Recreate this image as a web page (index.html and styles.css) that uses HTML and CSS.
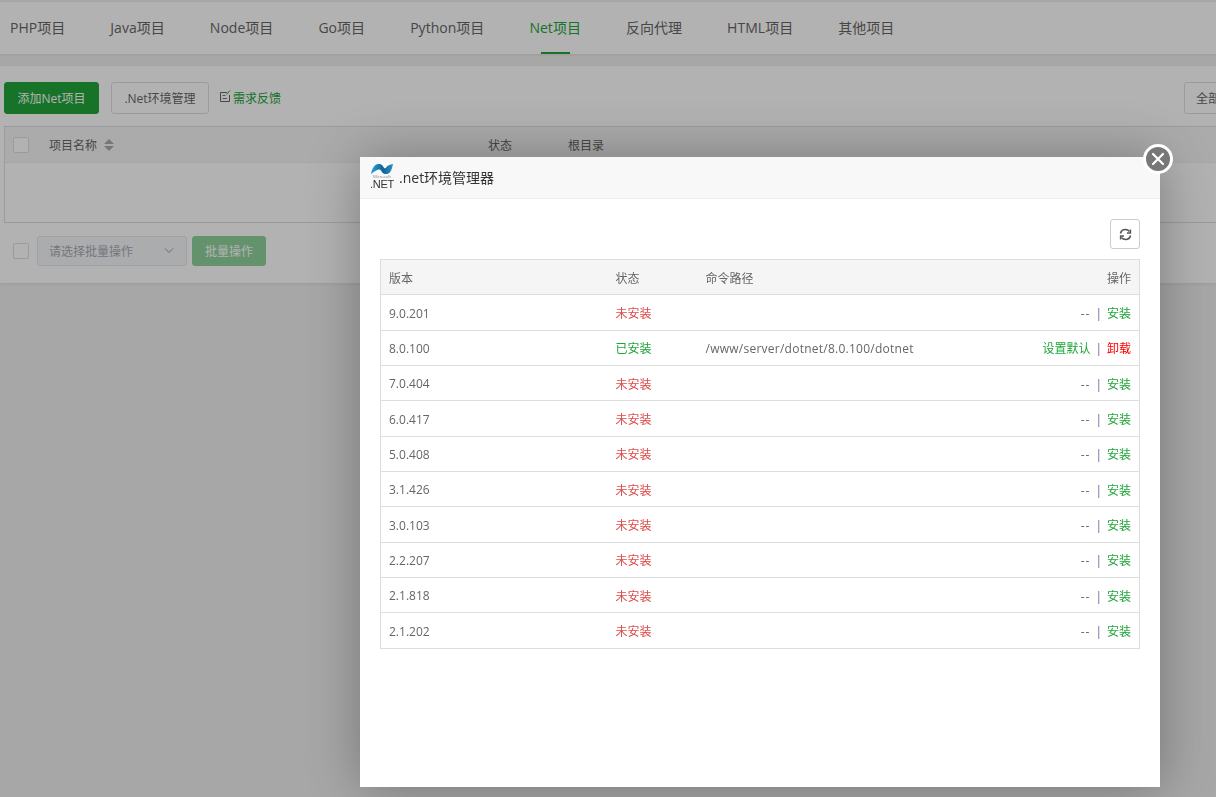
FILE: index.html
```html
<!DOCTYPE html>
<html lang="en">
<head>
  <meta charset="UTF-8" />
  <title>Net项目</title>
  <link rel="stylesheet" href="styles.css">
</head>
<body>

  <div class="page">
    <div class="tabs">
      <a class="tab">PHP项目</a>
      <a class="tab">Java项目</a>
      <a class="tab">Node项目</a>
      <a class="tab">Go项目</a>
      <a class="tab">Python项目</a>
      <a class="tab active">Net项目</a>
      <a class="tab">反向代理</a>
      <a class="tab">HTML项目</a>
      <a class="tab">其他项目</a>
    </div>

    <div class="card">
      <div class="toolbar">
        <button class="btn btn-green">添加Net项目</button>
        <button class="btn btn-plain">.Net环境管理</button>
        <a class="feedback">
          <svg width="12" height="13" viewBox="0 0 12 13" fill="none" stroke="#666">
            <path d="M8 2.5H1.5V11.5H10.5V5"/>
            <path d="M3.5 5.5H6.5M3.5 8.5H8" stroke="#777"/>
            <path d="M11 .5L7.5 4.5" stroke="#20a53a"/>
          </svg>
          <span>需求反馈</span>
        </a>
        <button class="btn btn-plain btn-all">全部</button>
      </div>

      <div class="project-table">
        <div class="project-head">
          <span class="check"></span>
          <span class="col-name">项目名称</span>
          <span class="sort"><i class="up"></i><i class="down"></i></span>
          <span class="col-status">状态</span>
          <span class="col-root">根目录</span>
        </div>
        <div class="project-body"></div>
      </div>

      <div class="batch">
        <span class="check"></span>
        <div class="batch-select">
          <span>请选择批量操作</span>
          <svg width="10" height="6" viewBox="0 0 10 6" fill="none" stroke="#999"><path d="M1 .5L5 4.5L9 .5"/></svg>
        </div>
        <button class="btn btn-batch">批量操作</button>
      </div>
    </div>
  </div>

  <div class="overlay"></div>

  <div class="modal">
    <div class="modal-title">
      <div class="net-logo">
        <svg width="22" height="10" viewBox="0 0 22 10">
          <defs>
            <linearGradient id="netWave" x1="0" y1="0" x2="1" y2="0">
              <stop offset="0" stop-color="#2f9fd4"/>
              <stop offset=".55" stop-color="#0d6596"/>
              <stop offset="1" stop-color="#2b93c6"/>
            </linearGradient>
          </defs>
          <path d="M0 10C1 4.5 3.5 0 7.5 0C11 0 11.8 2 13 3.8C13.8 4.8 14.6 4.4 15.4 3.2C16.6 1.6 18.5 .6 22 0C21.2 3.5 20.2 10 15.5 10C11.5 10 10.8 7.5 9.8 6.2C9 5.2 8 5.2 6.8 5.8C4.5 6.8 2.5 8.2 0 10Z" fill="url(#netWave)"/>
        </svg>
        <span class="net-small">Microsoft</span>
        <span class="net-word">.NET</span>
      </div>
      <span class="modal-name">.net环境管理器</span>
    </div>
    <a class="modal-close">
      <svg width="14" height="14" viewBox="0 0 14 14" stroke="#fff" stroke-width="2.2" stroke-linecap="round"><path d="M2 2L12 12M12 2L2 12"/></svg>
    </a>

    <div class="modal-body">
      <div class="refresh-row">
        <button class="refresh">
          <svg width="13" height="13" viewBox="0 0 13 13" fill="none" stroke="#555" stroke-width="1.6">
            <path d="M1.5 5.5C2 3 4 1.5 6.5 1.5C8.3 1.5 9.6 2.4 10.6 3.6"/>
            <path d="M11.5 7.5C11 10 9 11.5 6.5 11.5C4.7 11.5 3.4 10.6 2.4 9.4"/>
            <path d="M11.5 1.5V5H8" stroke-width="1.3"/>
            <path d="M1.5 11.5V8H5" stroke-width="1.3"/>
          </svg>
        </button>
      </div>

      <table class="env-table">
        <thead>
          <tr><th class="c-ver">版本</th><th class="c-state">状态</th><th>命令路径</th><th class="c-op">操作</th></tr>
        </thead>
        <tbody>
          <tr><td>9.0.201</td><td class="no">未安装</td><td></td><td class="c-op"><span class="dash">--</span><span class="sep">|</span><a class="ok">安装</a></td></tr>
          <tr><td>8.0.100</td><td class="ok">已安装</td><td class="c-path">/www/server/dotnet/8.0.100/dotnet</td><td class="c-op"><a class="ok">设置默认</a><span class="sep">|</span><a class="del">卸载</a></td></tr>
          <tr><td>7.0.404</td><td class="no">未安装</td><td></td><td class="c-op"><span class="dash">--</span><span class="sep">|</span><a class="ok">安装</a></td></tr>
          <tr><td>6.0.417</td><td class="no">未安装</td><td></td><td class="c-op"><span class="dash">--</span><span class="sep">|</span><a class="ok">安装</a></td></tr>
          <tr><td>5.0.408</td><td class="no">未安装</td><td></td><td class="c-op"><span class="dash">--</span><span class="sep">|</span><a class="ok">安装</a></td></tr>
          <tr><td>3.1.426</td><td class="no">未安装</td><td></td><td class="c-op"><span class="dash">--</span><span class="sep">|</span><a class="ok">安装</a></td></tr>
          <tr><td>3.0.103</td><td class="no">未安装</td><td></td><td class="c-op"><span class="dash">--</span><span class="sep">|</span><a class="ok">安装</a></td></tr>
          <tr><td>2.2.207</td><td class="no">未安装</td><td></td><td class="c-op"><span class="dash">--</span><span class="sep">|</span><a class="ok">安装</a></td></tr>
          <tr><td>2.1.818</td><td class="no">未安装</td><td></td><td class="c-op"><span class="dash">--</span><span class="sep">|</span><a class="ok">安装</a></td></tr>
          <tr><td>2.1.202</td><td class="no">未安装</td><td></td><td class="c-op"><span class="dash">--</span><span class="sep">|</span><a class="ok">安装</a></td></tr>
        </tbody>
      </table>
    </div>
  </div>

</body>
</html>
```

FILE: styles.css
```css
* {
  margin: 0;
  padding: 0;
  box-sizing: border-box;
  font-family: "Open Sans", "Noto Sans CJK SC", sans-serif;
}

html, body {
  height: 100%;
  overflow: hidden;
}

body {
  background: #f0f0f0;
  color: #666;
  font-size: 12px;
}

.page {
  padding-top: 2px;
}

/* top tabs */
.tabs {
  display: flex;
  height: 52px;
  background: #fff;
  padding-left: 10px;
  gap: 45px;
  box-shadow: 0 1px 3px rgba(0, 0, 0, 0.08);
}

.tab {
  position: relative;
  line-height: 52px;
  font-size: 14px;
  letter-spacing: 0.03px;
  color: #666;
  white-space: nowrap;
}

.tab.active {
  color: #20a53a;
}

.tab.active::after {
  content: "";
  position: absolute;
  left: 12px;
  right: 11px;
  bottom: 0;
  height: 2px;
  background: #20a53a;
}

/* main card */
.card {
  margin-top: 12px;
  height: 217px;
  background: #fff;
  padding: 16px 0 0 4px;
  box-shadow: 0 1px 3px rgba(0, 0, 0, 0.08);
}

.toolbar {
  display: flex;
  align-items: center;
  height: 32px;
}

.btn {
  height: 32px;
  border-radius: 3px;
  font-size: 12px;
  border: 1px solid #dcdfe6;
  background: #fff;
  color: #666;
  white-space: nowrap;
}

.btn-green {
  width: 95px;
  background: #20a53a;
  border-color: #20a53a;
  color: #fff;
}

.btn-plain {
  width: 98px;
  margin-left: 12px;
}

.feedback {
  display: flex;
  align-items: center;
  margin-left: 10px;
  color: #20a53a;
}

.feedback svg {
  margin-bottom: 3px;
  margin-right: 2px;
}

.btn-all {
  position: absolute;
  left: 1184px;
  width: 90px;
  margin: 0;
  padding-left: 11px;
  text-align: left;
}

.project-table {
  margin-top: 12px;
  width: 1300px;
  border: 1px solid #dcdfe6;
  height: 97px;
}

.project-head {
  position: relative;
  display: flex;
  align-items: center;
  height: 36px;
  background: #f5f5f5;
  border-bottom: 1px solid #ebeef5;
  padding-left: 8px;
}

.check {
  display: block;
  flex: none;
  width: 16px;
  height: 16px;
  border: 1px solid #dcdfe6;
  border-radius: 2px;
  background: #fff;
}

.col-name {
  margin-left: 20px;
}

.sort {
  display: flex;
  flex-direction: column;
  gap: 2px;
  margin-left: 7px;
}

.sort i {
  display: block;
  width: 0;
  height: 0;
  border-left: 5px solid transparent;
  border-right: 5px solid transparent;
}

.sort .up {
  border-bottom: 5px solid #a8abb2;
}

.sort .down {
  border-top: 5px solid #a8abb2;
}

.col-status {
  position: absolute;
  left: 483px;
}

.col-root {
  position: absolute;
  left: 563px;
}

.batch {
  display: flex;
  align-items: center;
  height: 30px;
  margin-top: 13px;
  padding-left: 9px;
}

.batch-select {
  display: flex;
  align-items: center;
  justify-content: space-between;
  width: 150px;
  height: 30px;
  margin-left: 8px;
  padding: 0 12px 0 11px;
  background: #f5f7fa;
  border: 1px solid #e4e7ed;
  border-radius: 3px;
  color: #a8abb2;
}

.btn-batch {
  width: 74px;
  height: 30px;
  margin-left: 5px;
  background: #90d29c;
  border-color: #90d29c;
  color: #fff;
}

/* layer */
.overlay {
  position: fixed;
  inset: 0;
  background: rgba(0, 0, 0, 0.3);
}

.modal {
  position: fixed;
  left: 360px;
  top: 157px;
  width: 800px;
  height: 630px;
  background: #fff;
  box-shadow: 1px 1px 50px rgba(0, 0, 0, 0.3);
}

.modal-title {
  display: flex;
  align-items: center;
  height: 42px;
  background: #f8f8f8;
  border-bottom: 1px solid #eee;
  padding-left: 11px;
}

.modal-name {
  margin-left: 6px;
  margin-bottom: 2px;
  font-size: 14px;
  color: #333;
}

.net-logo {
  display: flex;
  flex-direction: column;
  align-items: center;
  width: 22px;
  margin-bottom: 3px;
  color: #333;
}

.net-logo svg {
  display: block;
}

.net-small {
  font-size: 4px;
  line-height: 5px;
  color: #888;
}

.net-word {
  font-family: "Liberation Sans", sans-serif;
  font-size: 11px;
  line-height: 10px;
  letter-spacing: -0.3px;
}

.modal-close {
  position: absolute;
  right: -13px;
  top: -13px;
  display: flex;
  align-items: center;
  justify-content: center;
  width: 30px;
  height: 30px;
  border-radius: 50%;
  background: #777;
  border: 3px solid #fff;
}

.modal-body {
  padding: 20px 20px 0;
}

.refresh-row {
  display: flex;
  justify-content: flex-end;
  margin-bottom: 10px;
}

.refresh {
  display: flex;
  align-items: center;
  justify-content: center;
  width: 30px;
  height: 30px;
  background: #fff;
  border: 1px solid #ccc;
  border-radius: 3px;
}

.env-table {
  width: 760px;
  border-collapse: collapse;
  table-layout: fixed;
  font-size: 12px;
  color: #666;
}

.env-table th,
.env-table td {
  height: 35.35px;
  padding: 1px 8px 0;
  border: 1px solid #ddd;
  border-left: none;
  border-right: none;
  text-align: left;
  font-weight: 400;
}

.env-table tr > :first-child {
  border-left: 1px solid #ddd;
}

.env-table tr > :last-child {
  border-right: 1px solid #ddd;
}

.env-table th {
  background: #f5f5f5;
}

.env-table .c-ver {
  width: 227px;
}

.env-table .c-state {
  width: 90px;
}

.env-table .c-op {
  width: 160px;
  text-align: right;
}

.env-table .c-path {
  letter-spacing: 0.25px;
}

.env-table td.no {
  color: #e04a4a;
}

.ok {
  color: #20a53a;
}

.env-table td.ok {
  color: #20a53a;
}

.del {
  color: #f00;
}

.dash {
  letter-spacing: 1px;
}

.sep {
  margin: 0 5px;
  color: #7a5aa0;
}
```
